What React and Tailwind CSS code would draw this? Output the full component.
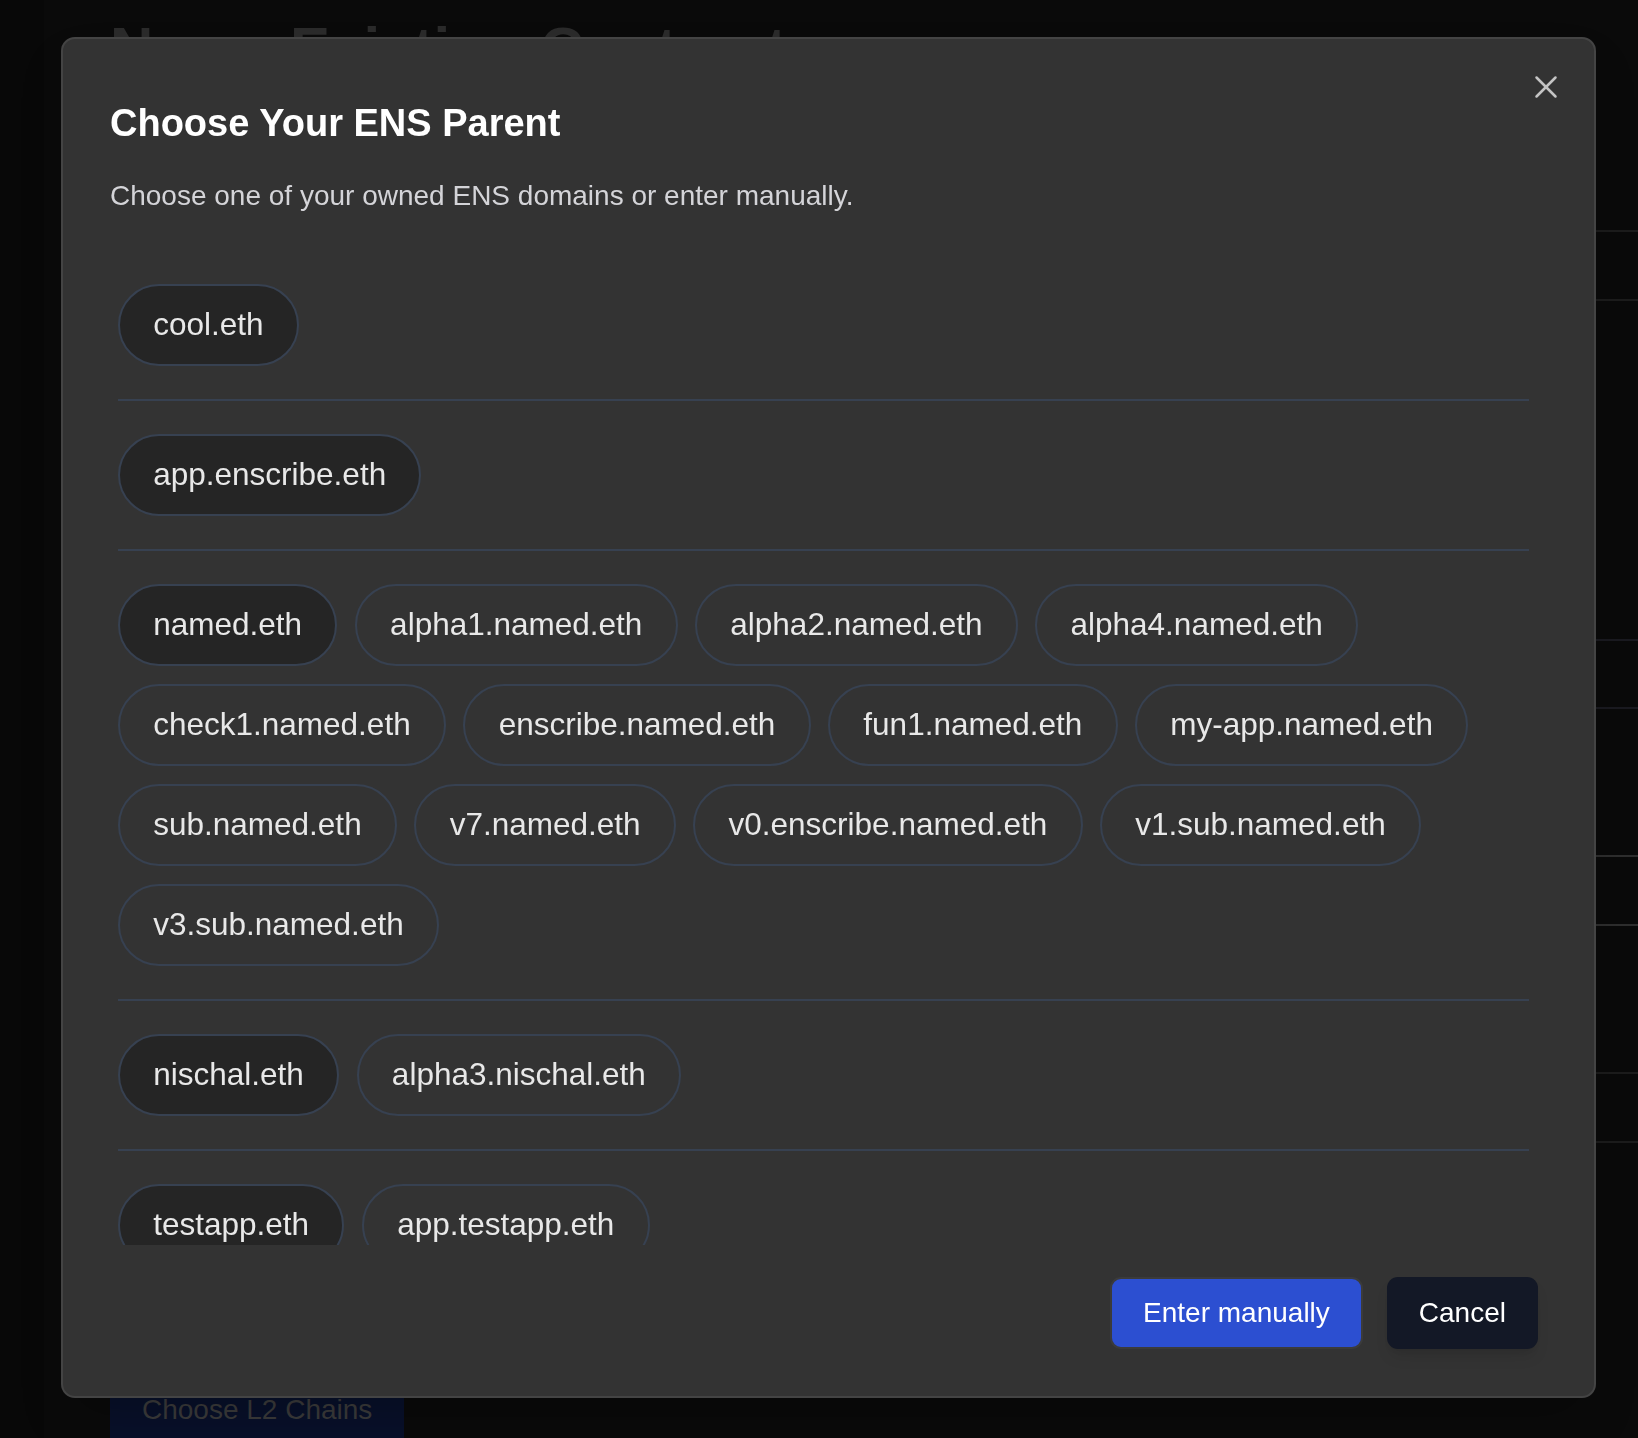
import React from 'react';

const groups = [
  ['cool.eth'],
  ['app.enscribe.eth'],
  [
    'named.eth',
    'alpha1.named.eth',
    'alpha2.named.eth',
    'alpha4.named.eth',
    'check1.named.eth',
    'enscribe.named.eth',
    'fun1.named.eth',
    'my-app.named.eth',
    'sub.named.eth',
    'v7.named.eth',
    'v0.enscribe.named.eth',
    'v1.sub.named.eth',
    'v3.sub.named.eth',
  ],
  ['nischal.eth', 'alpha3.nischal.eth'],
  ['testapp.eth', 'app.testapp.eth'],
];

const Chip = ({ name, primary }) => (
  <button
    className={`h-[82px] px-[33.25px] flex items-center rounded-full border-2 border-[#374151] text-[31.5px] leading-none text-[#e8e8e8] whitespace-nowrap ${
      primary ? 'bg-[#252525]' : 'bg-transparent'
    }`}
  >
    {name}
  </button>
);

const App = () => {
  return (
    <div className="relative min-h-screen bg-[#0a0a0a] overflow-hidden font-['Liberation_Sans',Arial,sans-serif]">
      {/* Page behind the dialog */}
      <div className="flex min-h-screen">
        <div className="w-[44px] shrink-0 bg-[#080808]" />
        <div className="flex-1 pl-[66px] flex flex-col">
          <h1 className="mt-[19px] text-[60px] leading-[60px] font-bold text-[#2b2b2b] whitespace-nowrap">
            Name Existing Contract
          </h1>
          <div className="mt-[151px] h-[71px] w-[1600px] border-y-2 border-[#1c1c1c]" />
          <div className="mt-[338px] h-[70px] w-[1600px] border-y-2 border-[#1a1a20]" />
          <div className="mt-[146px] h-[71px] w-[1600px] border-y-2 border-[#2e2e2e]" />
          <div className="mt-[146px] h-[71px] w-[1600px] border-y-2 border-[#1c1c1c]" />
          <div className="mt-[227px] h-[80px] w-[294px] bg-[#08102a] flex items-center pl-[32px] text-[28px] text-[#3b3b3b]">
            Choose L2 Chains
          </div>
        </div>
      </div>

      {/* Dialog */}
      <div className="fixed left-[61px] top-[37px] w-[1535px] h-[1361px] rounded-[14px] border-2 border-[#444444] bg-[#333333] shadow-2xl flex flex-col pt-[61px] pb-[47px]">
        <button className="absolute top-[36px] right-[36px] w-[24px] h-[24px] text-[#c4c4c4]">
          <svg width="24" height="24" viewBox="0 0 24 24" fill="none" stroke="currentColor" strokeWidth="2.5" strokeLinecap="round">
            <line x1="2.5" y1="2.5" x2="21.5" y2="21.5" />
            <line x1="21.5" y1="2.5" x2="2.5" y2="21.5" />
          </svg>
        </button>

        <h2 className="pl-[47px] text-[38px] leading-[46px] font-bold text-white">Choose Your ENS Parent</h2>
        <p className="pl-[47px] mt-[30px] text-[28px] leading-[40px] text-[#d4d4d8]">
          Choose one of your owned ENS domains or enter manually.
        </p>

        {/* Domain list */}
        <div className="ml-[55px] mt-[35px] w-[1411px] h-[994px] shrink-0 overflow-hidden">
          {groups.map((group, i) => (
            <div key={i} className="py-[33px] border-b-2 border-[#374151] flex flex-wrap gap-x-[17.5px] gap-y-[18px]">
              {group.map((name, j) => (
                <Chip key={name} name={name} primary={j === 0} />
              ))}
            </div>
          ))}
        </div>

        {/* Footer */}
        <div className="mt-[32px] pr-[56px] flex justify-end gap-[24px]">
          <button className="h-[72px] px-[31px] rounded-[11px] border-2 border-[#3b3b3b] bg-[#2c4fd1] text-[28px] text-white">
            Enter manually
          </button>
          <button className="h-[72px] px-[32px] rounded-[11px] bg-[#131826] text-[28px] text-white shadow-lg">
            Cancel
          </button>
        </div>
      </div>
    </div>
  );
};

export default App;
